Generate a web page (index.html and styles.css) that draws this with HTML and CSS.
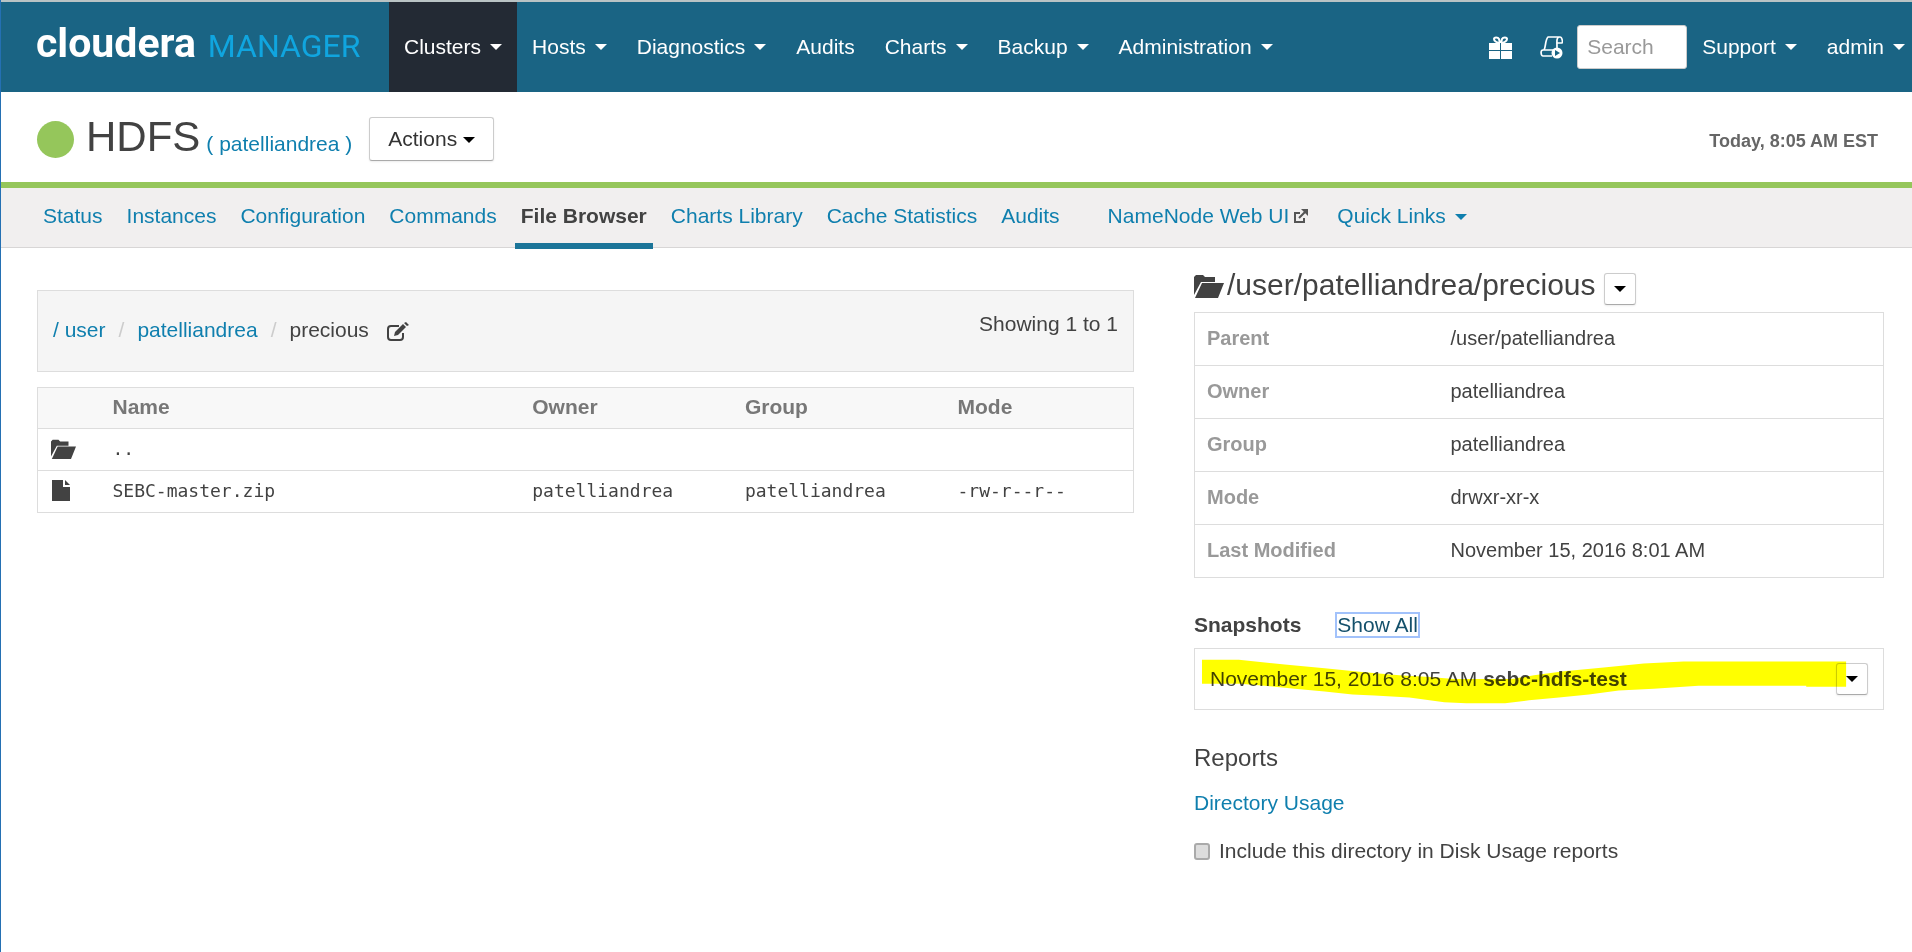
FILE: index.html
```html
<!DOCTYPE html>
<html lang="en">
<head>
<meta charset="utf-8">
<title>HDFS - Cloudera Manager</title>
<link rel="stylesheet" href="styles.css">
</head>
<body>
<svg class="sprite" aria-hidden="true">
  <symbol id="folder" viewBox="0 0 30 24">
    <path d="M0 21V3l2-2h7l2 2h10v5H7z"/>
    <path d="M8 9h22l-6 15H1z"/>
  </symbol>
</svg>

<header class="navbar">
  <a class="brand" href="#"><span class="brand-name">cloudera</span><span class="brand-product">MANAGER</span></a>
  <nav class="nav">
    <a class="nav-item nav-item-active" href="#">Clusters<span class="caret"></span></a>
    <a class="nav-item" href="#">Hosts<span class="caret"></span></a>
    <a class="nav-item" href="#">Diagnostics<span class="caret"></span></a>
    <a class="nav-item" href="#">Audits</a>
    <a class="nav-item" href="#">Charts<span class="caret"></span></a>
    <a class="nav-item" href="#">Backup<span class="caret"></span></a>
    <a class="nav-item" href="#">Administration<span class="caret"></span></a>
  </nav>
  <div class="nav-tools">
    <a class="nav-item nav-item-icon" href="#" aria-label="Parcels">
      <svg class="tool-icon" viewBox="0 0 23 23"><path fill="#fff" d="M0 7h11v7H0zM12 7h11v7H12zM0 15h11v8H0zM12 15h11v8H12z"/><path fill="none" stroke="#fff" stroke-width="2" d="M11 7C8 7 5 5 5 3s4-2 5 0l1 4M12 7c3 0 6-2 6-4s-4-2-5 0l-1 4"/></svg>
    </a>
    <a class="nav-item nav-item-icon" href="#" aria-label="Running commands">
      <svg class="tool-icon" viewBox="0 0 23 23"><path fill="none" stroke="#fff" stroke-width="1.7" stroke-linejoin="round" d="M4 14c2-3 1-10 4-13h12c2 0 3 5 2 6h-5M20 1c-4 0-3 4-3 11M12 20H3c-2 0-3-6 0-6h10"/><circle cx="17" cy="17" r="5.5" fill="#fff"/><path fill="#1a6484" d="M15 14l5 3-5 3z"/></svg>
    </a>
    <input class="search" type="search" placeholder="Search" aria-label="Search">
    <a class="nav-item" href="#">Support<span class="caret"></span></a>
    <a class="nav-item nav-item-last" href="#">admin<span class="caret"></span></a>
  </div>
</header>

<section class="service">
  <span class="health"></span>
  <div class="service-title">
    <h1 class="service-name">HDFS</h1>
    <span class="cluster">( <a href="#">patelliandrea</a> )</span>
  </div>
  <button class="btn" type="button">Actions<span class="caret caret-near"></span></button>
  <time class="clock">Today, 8:05 AM EST</time>
</section>

<nav class="tabs">
  <a class="tab" href="#">Status</a>
  <a class="tab" href="#">Instances</a>
  <a class="tab" href="#">Configuration</a>
  <a class="tab" href="#">Commands</a>
  <a class="tab tab-active" href="#">File Browser</a>
  <a class="tab" href="#">Charts Library</a>
  <a class="tab" href="#">Cache Statistics</a>
  <a class="tab" href="#">Audits</a>
  <a class="tab tab-spaced" href="#">NameNode Web UI<svg class="external" viewBox="0 0 14 14"><path fill="none" stroke="#555" stroke-width="2" d="M6 4H1v9h9V9M5 9l6-6"/><path fill="#555" d="M7 0h7v7z"/></svg></a>
  <a class="tab tab-menu" href="#">Quick Links<span class="caret"></span></a>
</nav>

<main class="content">
  <section class="browser">
    <div class="pathbar">
      <div class="crumbs">
        <a href="#">/ user</a><span class="divider">/</span><a href="#">patelliandrea</a><span class="divider">/</span><span>precious</span>
        <button class="edit" type="button" aria-label="Edit path"><svg class="edit-icon" viewBox="0 0 22 20"><path fill="none" stroke="#424242" stroke-width="2" d="M12 4H4Q1 4 1 7v8q0 3 3 3h9q3 0 3-3v-4"/><path fill="#424242" d="M7 14l1-4 8-8 3 3-8 8zM17 1l2-1 3 3-2 1z"/></svg></button>
      </div>
      <span class="showing">Showing 1 to 1</span>
    </div>
    <table class="files">
      <colgroup><col class="col-icon"><col class="col-name"><col class="col-owner"><col class="col-group"><col></colgroup>
      <thead>
        <tr><th></th><th>Name</th><th>Owner</th><th>Group</th><th>Mode</th></tr>
      </thead>
      <tbody>
        <tr><td><svg class="row-icon"><use href="#folder"/></svg></td><td>..</td><td></td><td></td><td></td></tr>
        <tr><td><svg class="row-icon row-icon-file" viewBox="0 0 18 21"><path d="M0 0h11v7h7v14H0z"/><path d="M13 0l5 5h-5z"/></svg></td><td>SEBC-master.zip</td><td>patelliandrea</td><td>patelliandrea</td><td>-rw-r--r--</td></tr>
      </tbody>
    </table>
  </section>

  <aside class="details">
    <div class="details-head">
      <svg class="head-icon"><use href="#folder"/></svg>
      <h2 class="path">/user/patelliandrea/precious</h2>
      <button class="btn btn-small" type="button" aria-label="Directory actions"><span class="caret caret-alone"></span></button>
    </div>
    <table class="props">
      <tr><th>Parent</th><td>/user/patelliandrea</td></tr>
      <tr><th>Owner</th><td>patelliandrea</td></tr>
      <tr><th>Group</th><td>patelliandrea</td></tr>
      <tr><th>Mode</th><td>drwxr-xr-x</td></tr>
      <tr><th>Last Modified</th><td>November 15, 2016 8:01 AM</td></tr>
    </table>
    <div class="snap-head">
      <h3 class="snap-title">Snapshots</h3>
      <a class="show-all" href="#">Show All</a>
    </div>
    <div class="snapshot">
      <span>November 15, 2016 8:05 AM <b>sebc-hdfs-test</b></span>
      <button class="btn btn-small" type="button" aria-label="Snapshot actions"><span class="caret caret-alone"></span></button>
      <svg class="marker" viewBox="0 0 690 62" preserveAspectRatio="none"><path fill="#ff0" d="M7 11H44L90 16 130 20 170 24 205 27 235 29 260 31H318L340 27 370 23 410 19 450 15 490 13H653V39H613V38H505L460 41 425 43 395 47 365 50 335 53 311 56H272L250 55 215 50 180 48 158 47 130 44 100 41 70 38 45 36H7z"/></svg>
    </div>
    <h3 class="reports">Reports</h3>
    <a class="report-link" href="#">Directory Usage</a>
    <label class="include"><input class="check" type="checkbox">Include this directory in Disk Usage reports</label>
  </aside>
</main>
</body>
</html>
```
FILE: styles.css
```css
* {
  box-sizing: border-box;
}

body {
  margin: 0;
  min-height: 100vh;
  border-left: 1px solid #2470b3;
  background: #fff;
  color: #424242;
  font: 21px/30px "Liberation Sans", Arial, sans-serif;
}

a {
  color: #0f7fae;
  text-decoration: none;
}

h1,
h2,
h3 {
  margin: 0;
  font-weight: normal;
}

button,
input {
  font: inherit;
}

.sprite {
  display: none;
}

.caret {
  display: inline-block;
  margin-left: 9px;
  border: 6px solid transparent;
  border-top-color: currentColor;
  border-bottom: 0;
  vertical-align: middle;
}

.caret-near {
  margin-left: 6px;
}

.caret-alone {
  margin-left: 0;
}

/* Top navigation */
.navbar {
  display: flex;
  height: 92px;
  border-top: 2px solid #b9c3c4;
  background: #1a6484;
}

.brand {
  display: flex;
  align-items: baseline;
  gap: 12px;
  width: 388px;
  padding: 17px 0 0 35px;
  font-family: Roboto, sans-serif;
  line-height: 48px;
}

.brand-name {
  color: #fff;
  font-size: 41px;
  font-weight: bold;
}

.brand-product {
  color: #10a5df;
  font-size: 32px;
}

.nav,
.nav-tools {
  display: flex;
  align-items: stretch;
}

.nav-tools {
  margin-left: auto;
  align-items: center;
}

.nav-item {
  display: flex;
  align-items: center;
  padding: 0 15px;
  color: #fff;
}

.nav-item-active {
  background: #232a34;
}

.nav-item-icon {
  padding: 0 14px;
}

.nav-item-last {
  padding-right: 7px;
}

.tool-icon {
  width: 23px;
  height: 23px;
}

.search {
  width: 110px;
  height: 44px;
  padding: 0 9px;
  border: 1px solid #ccc;
  border-radius: 3px;
  background: #fff;
}

.search::placeholder {
  color: #999;
}

/* Service header */
.service {
  display: flex;
  align-items: center;
  height: 96px;
  padding: 4px 34px 0 36px;
  border-bottom: 6px solid #95c65b;
}

.health {
  width: 37px;
  height: 37px;
  margin-right: 12px;
  border-radius: 50%;
  background: #95c65b;
}

.service-title {
  display: flex;
  align-items: baseline;
  gap: 6px;
  margin: 0 17px 4px 0;
}

.service-name {
  font-size: 42px;
  line-height: 60px;
}

.cluster {
  color: #0f7fae;
}

.btn {
  height: 44px;
  padding: 0 18px;
  border: 1px solid #ccc;
  border-bottom-color: #aaa;
  border-radius: 3px;
  background: #fff;
  box-shadow: 0 1px 2px rgba(0, 0, 0, 0.08);
  color: #333;
}

.btn .caret {
  border-top-color: #000;
}

.btn-small {
  display: flex;
  align-items: center;
  justify-content: center;
  width: 32px;
  height: 32px;
  padding: 0;
}

.clock {
  margin: 4px 0 0 auto;
  color: #666;
  font-size: 18px;
  font-weight: bold;
}

/* Service tabs */
.tabs {
  display: flex;
  gap: 12px;
  height: 60px;
  padding-left: 36px;
  border-bottom: 1px solid #d8d6d6;
  background: #f1efef;
}

.tab {
  height: 61px;
  padding: 13px 6px 0;
}

.tab-active {
  border-bottom: 6px solid #1c7599;
  color: #424242;
  font-weight: bold;
}

.tab-spaced {
  margin-left: 24px;
}

.tab-menu {
  margin-left: 5px;
}

.external {
  width: 14px;
  height: 14px;
  margin-left: 5px;
}

/* Page columns */
.content {
  display: grid;
  grid-template-columns: 1097fr 690fr;
  gap: 60px;
  padding: 24px 28px 24px 36px;
}

.browser {
  padding-top: 18px;
}

.pathbar {
  display: flex;
  justify-content: space-between;
  height: 82px;
  margin-bottom: 15px;
  padding: 18px 15px 0;
  border: 1px solid #ddd;
  background: #f5f5f5;
}

.crumbs {
  display: flex;
  align-items: flex-start;
  padding-top: 6px;
}

.divider {
  padding: 0 13px;
  color: #ccc;
}

.edit {
  display: flex;
  align-items: center;
  height: 34px;
  margin-left: 18px;
  padding: 0;
  border: 0;
  background: none;
}

.edit-icon {
  width: 22px;
  height: 20px;
}

table {
  width: 100%;
  border: 1px solid #ddd;
  border-collapse: collapse;
  table-layout: fixed;
}

th,
td {
  border-bottom: 1px solid #ddd;
  text-align: left;
}

.files th,
.files td {
  height: 42px;
  padding: 0 12px 2px;
}

.files th {
  height: 41px;
  background: #f8f8f8;
  color: #777;
}

.files td {
  font-family: "DejaVu Sans Mono", monospace;
  font-size: 18px;
}

.col-icon {
  width: 63px;
}

.col-name {
  width: 38.3%;
}

.col-owner,
.col-group {
  width: 19.4%;
}

.row-icon {
  display: block;
  width: 27px;
  height: 20px;
  fill: #424242;
}

.row-icon-file {
  width: 18px;
  height: 21px;
  margin-left: 2px;
}

/* Directory details */
.details-head {
  display: flex;
  align-items: flex-start;
  height: 40px;
}

.head-icon {
  width: 30px;
  height: 24px;
  margin: 2px 3px 0 0;
  fill: #424242;
}

.path {
  margin-right: 8px;
  font-size: 30px;
  line-height: 26px;
}

.details-head .btn {
  align-self: flex-end;
  margin-bottom: 7px;
}

.props {
  font-size: 20px;
}

.props th,
.props td {
  height: 53px;
  padding: 0 12px 2px;
}

.props th {
  width: 244px;
  color: #999;
}

.snap-head {
  display: flex;
  align-items: center;
  gap: 36px;
  margin: 32px 0 8px;
}

.snap-title {
  font-size: 21px;
  font-weight: bold;
}

.show-all {
  outline: 2px solid #a2c2fb;
  color: #14506b;
  line-height: 22px;
}

.snapshot {
  position: relative;
  display: flex;
  align-items: center;
  justify-content: space-between;
  height: 62px;
  padding: 0 15px;
  border: 1px solid #ddd;
}

.marker {
  position: absolute;
  inset: 0;
  width: 100%;
  height: 100%;
  mix-blend-mode: multiply;
  pointer-events: none;
}

.reports {
  margin: 33px 0 15px;
  font-size: 24px;
}

.report-link {
  display: block;
  margin-bottom: 18px;
}

.include {
  display: flex;
  align-items: center;
  gap: 9px;
}

.check {
  width: 16px;
  height: 17px;
  margin: 0;
  border: 2px solid #aaa;
  border-radius: 3px;
  background: #ddd;
  appearance: none;
}
```
